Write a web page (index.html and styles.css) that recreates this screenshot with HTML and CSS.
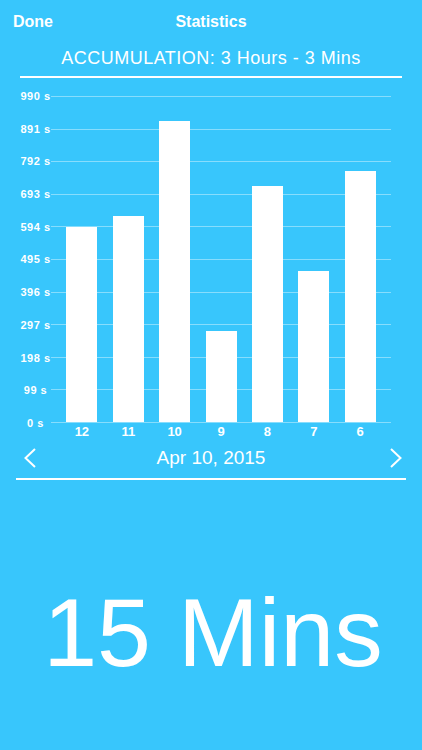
FILE: index.html
```html
<!DOCTYPE html>
<html lang="en">
  <head>
    <meta charset="UTF-8" />
    <meta name="viewport" content="width=device-width, initial-scale=1.0" />
    <title>Statistics</title>
    <link rel="stylesheet" href="styles.css">
  </head>
  <body>
    <!-- Navigation bar -->
    <header class="navbar">
      <a class="nav-btn" href="#">Done</a>
      <h1 class="nav-title">Statistics</h1>
      <span></span>
    </header>

    <main>
      <div class="summary">ACCUMULATION: 3 Hours - 3 Mins</div>

      <!-- Daily chart -->
      <section class="chart">
        <div class="chart-body">
          <div class="y-axis">
            <span>990 s</span>
            <span>891 s</span>
            <span>792 s</span>
            <span>693 s</span>
            <span>594 s</span>
            <span>495 s</span>
            <span>396 s</span>
            <span>297 s</span>
            <span>198 s</span>
            <span>99 s</span>
            <span>0 s</span>
          </div>
          <div class="plot">
            <div class="grid">
              <i></i><i></i><i></i><i></i><i></i><i></i>
              <i></i><i></i><i></i><i></i><i></i>
            </div>
            <div class="bars">
              <div class="bar" style="height: 195px"></div>
              <div class="bar" style="height: 206px"></div>
              <div class="bar" style="height: 301px"></div>
              <div class="bar" style="height: 91px"></div>
              <div class="bar" style="height: 236px"></div>
              <div class="bar" style="height: 151px"></div>
              <div class="bar" style="height: 251px"></div>
            </div>
          </div>
        </div>
        <div class="x-axis">
          <span>12</span>
          <span>11</span>
          <span>10</span>
          <span>9</span>
          <span>8</span>
          <span>7</span>
          <span>6</span>
        </div>
      </section>

      <!-- Date switcher -->
      <div class="date-nav">
        <svg class="chevron chevron-left" width="12" height="20" viewBox="0 0 12 20">
          <polyline points="11,1 1.5,10 11,19" />
        </svg>
        <div class="date">Apr 10, 2015</div>
        <svg class="chevron chevron-right" width="12" height="20" viewBox="0 0 12 20">
          <polyline points="1,1 10.5,10 1,19" />
        </svg>
      </div>

      <div class="total">15 Mins</div>
    </main>
  </body>
</html>
```

FILE: styles.css
```css
body {
  margin: 0;
  padding: 0;
  height: 750px;
  background: #38c6fc;
  color: #fff;
  font-family: "Liberation Sans", Arial, sans-serif;
}
/* Navigation bar */
.navbar {
  display: grid;
  grid-template-columns: 1fr auto 1fr;
  align-items: center;
  height: 44px;
  padding: 0 13px;
}
.nav-btn {
  justify-self: start;
  color: #fff;
  text-decoration: none;
  font-size: 16px;
  font-weight: bold;
}
.nav-title {
  margin: 0;
  font-size: 16px;
  font-weight: bold;
}
.summary {
  margin: 0 20px;
  padding: 3px 0 7px;
  font-size: 18px;
  line-height: 22px;
  letter-spacing: 0.5px;
  text-align: center;
  border-bottom: 2px solid #fff;
}
/* Chart */
.chart {
  margin-top: 18px;
}
.chart-body {
  display: flex;
  align-items: center;
  padding-left: 20px;
}
.y-axis {
  display: flex;
  flex-direction: column;
  justify-content: space-between;
  width: 31px;
  height: 341px;
  margin: -7px 0;
  font-size: 11px;
  font-weight: bold;
  line-height: 14px;
  letter-spacing: 0.5px;
  text-align: center;
}
.plot {
  display: grid;
  width: 340px;
  height: 327px;
}
.grid,
.bars {
  grid-area: 1 / 1;
}
.grid {
  display: flex;
  flex-direction: column;
  justify-content: space-between;
}
.grid i {
  display: block;
  height: 1px;
  background: rgba(255, 255, 255, 0.4);
}
.bars {
  display: flex;
  align-items: flex-end;
  justify-content: space-evenly;
  height: 326px;
}
.bar {
  width: 31px;
  background: #fff;
}
.x-axis {
  display: flex;
  justify-content: space-evenly;
  width: 340px;
  margin: 1px 0 0 51px;
  font-size: 13px;
  font-weight: bold;
  line-height: 16px;
}
.x-axis span {
  width: 31px;
  text-align: center;
}
/* Date switcher */
.date-nav {
  display: grid;
  grid-template-columns: 1fr auto 1fr;
  align-items: center;
  height: 36px;
  margin: 0 16px;
  padding-bottom: 2px;
  border-bottom: 2px solid #fff;
}
.chevron {
  display: block;
}
.chevron polyline {
  fill: none;
  stroke: #fff;
  stroke-width: 2;
}
.chevron-left {
  margin-left: 8px;
}
.chevron-right {
  justify-self: end;
  margin-right: 4px;
}
.date {
  font-size: 19px;
}
.total {
  margin-top: 104px;
  padding-left: 4px;
  font-size: 97px;
  line-height: 97px;
  text-align: center;
}
```
